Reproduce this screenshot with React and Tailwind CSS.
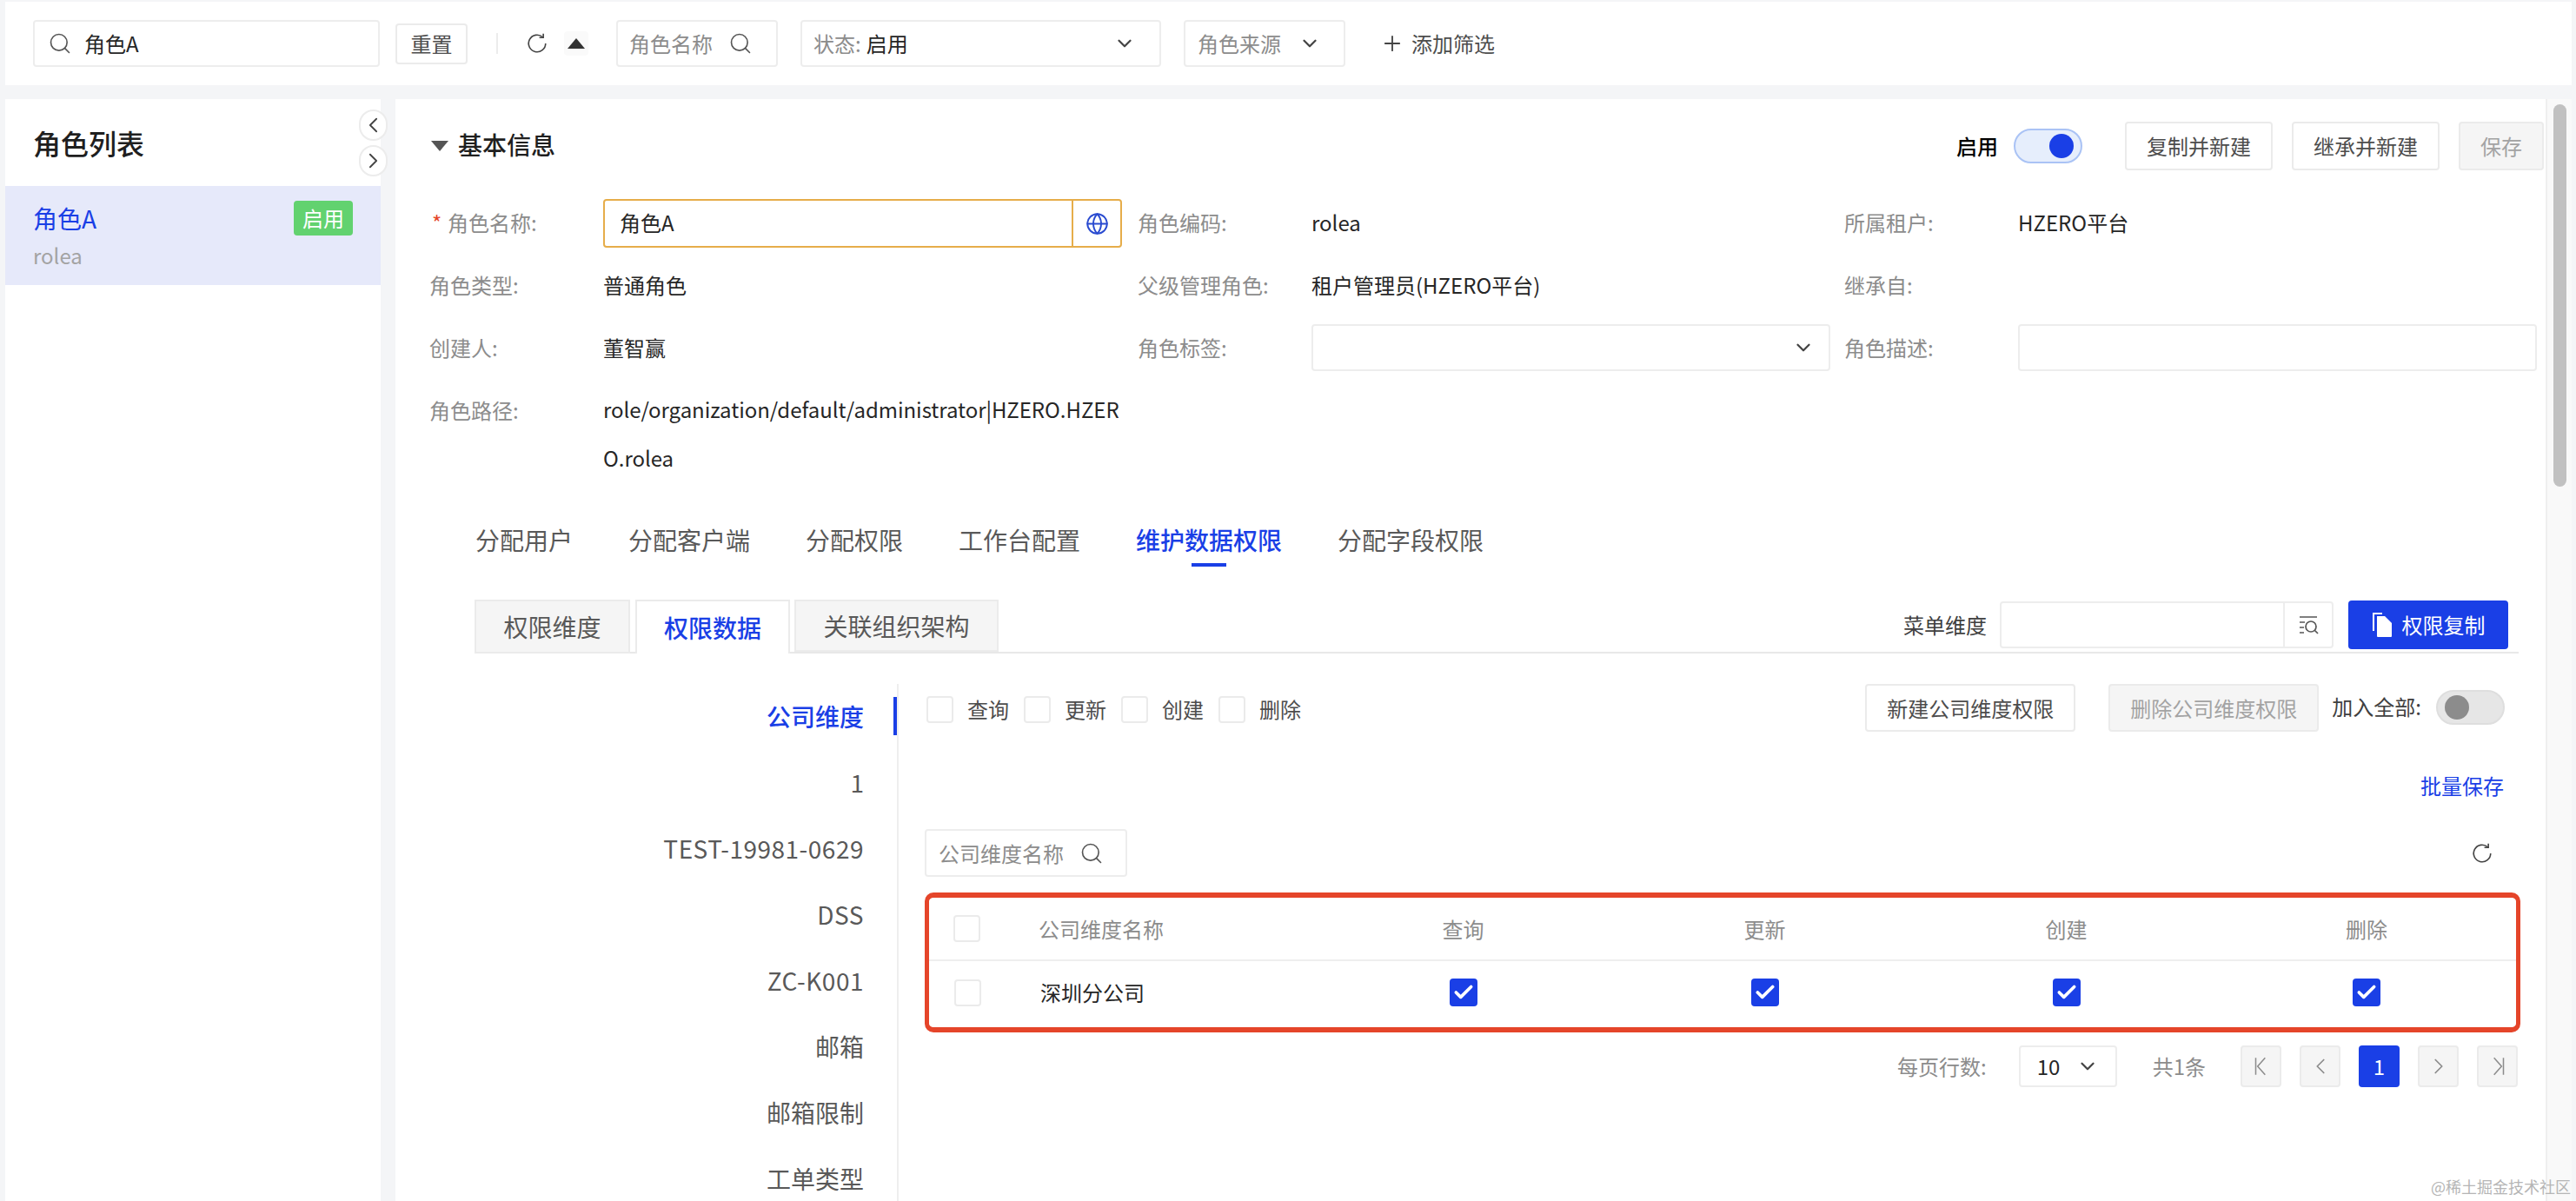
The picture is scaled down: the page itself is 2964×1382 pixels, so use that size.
import { Check, ChevronDown, ChevronLeft, ChevronRight, Globe, Plus, Search } from 'lucide-react';

const permissions = ['查询', '更新', '创建', '删除'];
const mainTabs = ['分配用户', '分配客户端', '分配权限', '工作台配置', '维护数据权限', '分配字段权限'];
const dimensions = [
  { name: '公司维度' },
  { name: '1' },
  { name: 'TEST-19981-0629', latin: true },
  { name: 'DSS', latin: true },
  { name: 'ZC-K001', latin: true },
  { name: '邮箱' },
  { name: '邮箱限制' },
  { name: '工单类型' },
];

function Box({ className = '', children }) {
  return <div className={`flex items-center border-2 border-[#ededed] rounded-[4px] bg-white ${className}`}>{children}</div>;
}

function Btn({ className = '', disabled, children }) {
  return (
    <button className={`flex items-center justify-center border-2 border-[#ebebeb] rounded-[4px] text-[24px] leading-none ${disabled ? 'bg-[#f5f5f5] text-[#a3a3a3]' : 'bg-white text-[#4d4d4d]'} ${className}`}>
      {children}
    </button>
  );
}

function Refresh() {
  return (
    <svg width="26" height="26" viewBox="0 0 24 24" fill="none" stroke="#444" strokeWidth="1.5" className="shrink-0">
      <path d="M21 12a9 9 0 1 1-3-6.7" />
      <path d="M18.6 1.6v4.2h-4.2" />
    </svg>
  );
}

function PageEdge({ last }) {
  return (
    <svg width="26" height="26" viewBox="0 0 24 24" fill="none" stroke="#8c8c8c" strokeWidth="1.4">
      {last ? <path d="M8 3l8 9-8 9M18 3v18" /> : <path d="M16 3l-8 9 8 9M6 3v18" />}
    </svg>
  );
}

function CheckBox({ checked, className = '' }) {
  if (checked) {
    return (
      <span className={`flex items-center justify-center w-[32px] h-[32px] rounded-[4px] bg-[#1a3fe6] ${className}`}>
        <Check size={26} strokeWidth={3.4} color="#fff" />
      </span>
    );
  }
  return <span className={`block w-[31px] h-[31px] rounded-[4px] border-2 border-[#ebebeb] bg-white ${className}`} />;
}

function Field({ label, required, children }) {
  return (
    <div className="flex items-start py-[8px]">
      <div className="flex items-center shrink-0 w-[200px] h-[56px] pb-[2px] text-[24px] text-[#8c8c8c]">
        {required && <span className="text-[#e5452a] w-[21px] pl-[3px]">*</span>}
        {label}:
      </div>
      {children}
    </div>
  );
}

function Value({ children }) {
  return <div className="flex items-center h-[56px] pb-[2px] text-[24px] text-[#262626]">{children}</div>;
}

function Toggle({ on, className = '' }) {
  return (
    <span className={`flex items-center w-[79px] h-[40px] rounded-full border-2 px-[8px] ${on ? 'justify-end bg-[#e6eefc] border-[#aac3f5]' : 'bg-[#e6e6e6] border-[#dedede]'} ${className}`}>
      <span className={`block w-[28px] h-[28px] rounded-full ${on ? 'bg-[#1a3fe6]' : 'bg-[#8c8c8c]'}`} />
    </span>
  );
}

export default function App() {
  return (
    <div className="relative flex flex-col w-full h-screen overflow-hidden pt-[2px] pl-[6px] pr-[5px] bg-[#f4f5f7] font-['Noto_Sans_CJK_SC','Noto_Sans',sans-serif]">
      {/* top filter bar */}
      <div className="flex items-center shrink-0 h-[96px] pl-[32px] bg-white text-[24px]">
        <Box className="w-[399px] h-[54px] pl-[15px]">
          <Search size={28} strokeWidth={1.4} color="#555" />
          <span className="ml-[14px] text-[#262626]">角色A</span>
        </Box>
        <Btn className="ml-[18px] w-[83px] h-[47px]">重置</Btn>
        <span className="ml-[33px] w-[2px] h-[24px] bg-[#ececec]" />
        <span className="ml-[32px]"><Refresh /></span>
        <span className="flex items-center justify-center ml-[18px] w-[28px] h-[28px] rounded-[4px] bg-[#fafafa]">
          <span className="block w-0 h-0 border-x-[10px] border-x-transparent border-b-[12px] border-b-[#333]" />
        </span>
        <Box className="ml-[32px] w-[186px] h-[54px] pl-[13px] text-[#8c8c8c]">
          角色名称
          <Search className="ml-[18px]" size={28} strokeWidth={1.4} color="#555" />
        </Box>
        <Box className="ml-[26px] w-[415px] h-[54px] pl-[13px] text-[#8c8c8c]">
          状态:<span className="ml-[6px] text-[#262626]">启用</span>
          <ChevronDown className="ml-auto mr-[27px]" size={26} strokeWidth={2.1} color="#444" />
        </Box>
        <Box className="ml-[26px] w-[186px] h-[54px] pl-[14px] text-[#8c8c8c]">
          角色来源
          <ChevronDown className="ml-[20px]" size={26} strokeWidth={2.1} color="#444" />
        </Box>
        <Plus className="ml-[40px]" size={28} strokeWidth={1.6} color="#444" />
        <span className="ml-[8px] text-[#4d4d4d]">添加筛选</span>
      </div>

      <div className="flex flex-1 min-h-0 mt-[16px] gap-[17px]">
        {/* role list */}
        <div className="relative w-[432px] shrink-0 bg-white">
          <div className="flex items-center h-[100px] pl-[32px] text-[32px] font-medium text-[#1f1f1f]">角色列表</div>
          <div className="relative h-[114px] pl-[32px] pr-[32px] bg-[#e6e9fa]">
            <div className="flex items-start justify-between pt-[17px]">
              <span className="text-[28px] leading-[40px] text-[#1a3fe6]">角色A</span>
              <span className="flex items-center justify-center w-[68px] h-[40px] rounded-[4px] bg-[#62d26f] text-[24px] text-white">启用</span>
            </div>
            <div className="mt-[8px] text-[24px] leading-[30px] text-[#a3a3a3]">rolea</div>
          </div>
          <button className="absolute left-[407px] top-[12px] flex items-center justify-center w-[33px] h-[36px] rounded-full border-2 border-[#ececec] bg-white">
            <ChevronLeft size={30} strokeWidth={1.5} color="#444" />
          </button>
          <button className="absolute left-[407px] top-[53px] flex items-center justify-center w-[33px] h-[36px] rounded-full border-2 border-[#ececec] bg-white">
            <ChevronRight size={30} strokeWidth={1.5} color="#444" />
          </button>
        </div>

        {/* detail panel */}
        <div className="flex flex-1 min-w-0 bg-white">
          <div className="flex-1 min-w-0 overflow-hidden pl-[39px]">
            <div className="flex items-center pt-[26px] pr-[2px]">
              <span className="block ml-[2px] w-0 h-0 border-x-[10px] border-x-transparent border-t-[12px] border-t-[#555]" />
              <span className="ml-[11px] pb-[3px] text-[28px] leading-[53px] font-medium text-[#1f1f1f]">基本信息</span>
              <span className="ml-auto text-[24px] font-medium text-black">启用</span>
              <Toggle on className="ml-[18px]" />
              <Btn className="ml-[49px] w-[170px] h-[56px]">复制并新建</Btn>
              <Btn className="ml-[22px] w-[170px] h-[56px]">继承并新建</Btn>
              <Btn disabled className="ml-[22px] w-[98px] h-[56px]">保存</Btn>
            </div>

            <div className="grid grid-cols-[815px_813px_797px] mt-[25px]">
              <Field label="角色名称" required>
                <div className="flex items-center w-[597px] h-[56px] border-2 border-[#e6ad4a] rounded-[4px]">
                  <span className="flex-1 pl-[17px] pb-[2px] text-[24px] text-[#262626]">角色A</span>
                  <span className="flex items-center justify-center w-[56px] h-full border-l-2 border-[#e6ad4a]">
                    <Globe size={27} strokeWidth={1.7} color="#2a4bd0" />
                  </span>
                </div>
              </Field>
              <Field label="角色编码"><Value>rolea</Value></Field>
              <Field label="所属租户"><Value>HZERO平台</Value></Field>

              <Field label="角色类型"><Value>普通角色</Value></Field>
              <Field label="父级管理角色"><Value>租户管理员(HZERO平台)</Value></Field>
              <Field label="继承自" />

              <Field label="创建人"><Value>董智赢</Value></Field>
              <Field label="角色标签">
                <Box className="w-[597px] h-[54px] justify-end pr-[16px]">
                  <ChevronDown size={26} strokeWidth={2.1} color="#444" />
                </Box>
              </Field>
              <Field label="角色描述">
                <Box className="w-[597px] h-[54px]" />
              </Field>

              <Field label="角色路径">
                <div className="w-[597px] -mt-[2px] text-[24px] leading-[56px] tracking-[-0.04px] text-[#262626] break-all">
                  role/organization/default/administrator|HZERO.HZERO.rolea
                </div>
              </Field>
            </div>

            <div className="ml-[52px] w-[2352px]">
              {/* main tabs */}
              <div className="flex gap-[64px] mt-[36px] pl-[1px]">
                {mainTabs.map((tab) => (
                  <div key={tab} className="flex flex-col items-center">
                    <span className={`text-[28px] leading-[44px] ${tab === '维护数据权限' ? 'font-medium text-[#1a3fe6]' : 'text-[#595959]'}`}>{tab}</span>
                    <span className={`block mt-[5px] w-[40px] h-[4px] ${tab === '维护数据权限' ? 'bg-[#1a3fe6]' : ''}`} />
                  </div>
                ))}
              </div>

              {/* card tabs */}
              <div className="flex items-start h-[62px] mt-[38px] border-b-2 border-[#e8e8e8]">
                <div className="flex items-center justify-center w-[179px] h-[62px] border-2 border-[#ebebeb] bg-[#f5f5f5] text-[28px] text-[#595959]">权限维度</div>
                <div className="flex items-center justify-center ml-[6px] w-[178px] h-[62px] border-2 border-b-0 border-[#ebebeb] bg-white text-[28px] font-medium text-[#1a3fe6]">权限数据</div>
                <div className="flex items-center justify-center ml-[5px] w-[235px] h-[60px] border-2 border-[#ebebeb] bg-[#f5f5f5] text-[28px] text-[#595959]">关联组织架构</div>
                <div className="flex items-center h-[58px] ml-auto mr-[12px]">
                  <span className="text-[24px] text-[#404040]">菜单维度</span>
                  <Box className="ml-[15px] w-[384px] h-[54px] justify-end">
                    <span className="flex items-center justify-center w-[56px] h-full border-l-2 border-[#ededed]">
                      <svg width="26" height="26" viewBox="0 0 26 26" fill="none" stroke="#555" strokeWidth="1.7">
                        <path d="M3 4h20M3 10h6M3 16h5M3 22h5" />
                        <circle cx="16" cy="15" r="6" />
                        <path d="M20.5 19.5 24 23" />
                      </svg>
                    </span>
                  </Box>
                  <button className="flex items-center justify-center ml-[17px] w-[184px] h-[56px] rounded-[4px] bg-[#1a3fe6] text-[24px] text-white">
                    <svg width="24" height="30" viewBox="0 0 24 30" fill="#fff">
                      <path d="M1 1h11v2H3v19H1z" />
                      <path d="M6 5h9l8 8v15a1 1 0 0 1-1 1H7a1 1 0 0 1-1-1z" />
                    </svg>
                    <span className="ml-[11px]">权限复制</span>
                  </button>
                </div>
              </div>

              <div className="flex mt-[35px]">
                {/* dimension list */}
                <div className="flex flex-col gap-[32px] w-[488px] h-[700px] shrink-0 pt-[15px] border-r-2 border-[#eeeeee]">
                  {dimensions.map((d, i) => (
                    <div key={d.name} className={`flex items-center justify-end h-[44px] pr-[34px] border-r-4 text-[28px] ${d.latin ? 'tracking-[0.5px]' : ''} ${i === 0 ? 'border-[#1a3fe6] font-medium text-[#1a3fe6]' : 'border-transparent text-[#595959]'}`}>
                      {d.name}
                    </div>
                  ))}
                </div>

                <div className="flex-1 min-w-0 pl-[30px]">
                  <div className="flex items-start h-[55px] pr-[16px]">
                    <div className="flex ml-[2px] mt-[11px]">
                      {permissions.map((p) => (
                        <div key={p} className="flex items-center w-[112px]">
                          <CheckBox />
                          <span className="ml-[16px] text-[24px] text-[#4d4d4d]">{p}</span>
                        </div>
                      ))}
                    </div>
                    <Btn className="ml-auto w-[242px] h-[55px]">新建公司维度权限</Btn>
                    <Btn disabled className="ml-[38px] w-[242px] h-[55px]">删除公司维度权限</Btn>
                    <span className="ml-[15px] mt-[8px] text-[24px] text-[#404040]">加入全部:</span>
                    <Toggle className="ml-[17px] mt-[7px]" />
                  </div>

                  <div className="mt-[42px] pr-[17px] text-right text-[24px] leading-[40px] text-[#1a3fe6]">批量保存</div>

                  <div className="flex items-center justify-between mt-[30px] pr-[29px]">
                    <Box className="w-[233px] h-[55px] pl-[14px] text-[24px] text-[#8c8c8c]">
                      公司维度名称
                      <Search className="ml-[18px]" size={28} strokeWidth={1.4} color="#555" />
                    </Box>
                    <Refresh />
                  </div>

                  {/* table */}
                  <div className="mt-[18px] w-[1836px] h-[161px] border-x-[5px] border-y-[6px] border-[#e5452a] rounded-[10px]">
                    <div className="grid grid-cols-[126px_315px_347px_347px_347px_344px] items-center h-[73px] border-b-2 border-[#eeeeee] text-[24px] text-[#8c8c8c]">
                      <CheckBox className="ml-[28px]" />
                      <span>公司维度名称</span>
                      {permissions.map((p) => <span key={p} className="text-center">{p}</span>)}
                    </div>
                    <div className="grid grid-cols-[126px_315px_347px_347px_347px_344px] items-center h-[72px] text-[24px] text-[#262626]">
                      <CheckBox className="ml-[29px]" />
                      <span className="pl-[2px]">深圳分公司</span>
                      {permissions.map((p) => (
                        <span key={p} className="flex justify-center"><CheckBox checked /></span>
                      ))}
                    </div>
                  </div>

                  {/* pagination */}
                  <div className="flex items-center justify-end mt-[15px] w-[1833px] text-[24px]">
                    <span className="text-[#8c8c8c]">每页行数:</span>
                    <Box className="ml-[37px] w-[113px] h-[48px] pl-[19px] text-[#262626]">
                      10
                      <ChevronDown className="ml-[19px]" size={26} strokeWidth={2.1} color="#444" />
                    </Box>
                    <span className="ml-[41px] text-[#8c8c8c]">共1条</span>
                    <div className="flex gap-[21px] ml-[40px]">
                      <Btn disabled className="w-[47px] h-[48px]"><PageEdge /></Btn>
                      <Btn disabled className="w-[47px] h-[48px]"><ChevronLeft size={30} strokeWidth={1.4} color="#8c8c8c" /></Btn>
                      <span className="flex items-center justify-center w-[47px] h-[48px] rounded-[4px] bg-[#1a3fe6] text-white">1</span>
                      <Btn disabled className="w-[47px] h-[48px]"><ChevronRight size={30} strokeWidth={1.4} color="#8c8c8c" /></Btn>
                      <Btn disabled className="w-[47px] h-[48px]"><PageEdge last /></Btn>
                    </div>
                  </div>
                </div>
              </div>
            </div>
          </div>

          {/* scrollbar */}
          <div className="w-[30px] shrink-0 pt-[6px] pl-[7px] bg-[#f9f9f9] border-l-2 border-[#efefef]">
            <div className="w-[15px] h-[440px] rounded-full bg-[#c1c1c1]" />
          </div>
        </div>
      </div>

      <span className="absolute right-[6px] bottom-[6px] text-[18px] leading-[22px] text-[#b5b5b5]">@稀土掘金技术社区</span>
    </div>
  );
}
